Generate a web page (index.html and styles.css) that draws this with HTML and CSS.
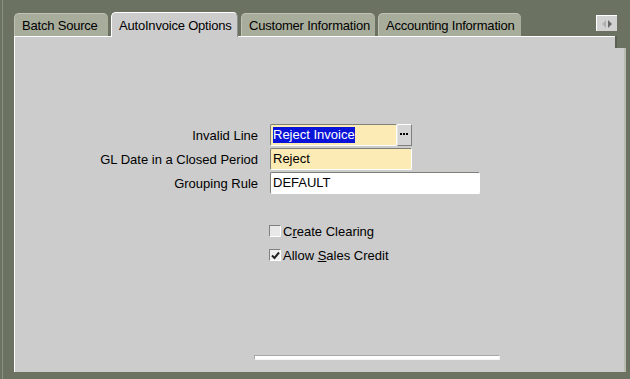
FILE: index.html
```html
<!DOCTYPE html>
<html lang="en">

<head>
  <meta charset="UTF-8">
  <title>AutoInvoice Options</title>
  <link rel="stylesheet" href="styles.css">
</head>

<body>
  <div class="window">
    <div class="tab-bar">
      <div class="tab tab-batch">Batch Source</div>
      <div class="tab tab-auto active">AutoInvoice Options</div>
      <div class="tab tab-customer">Customer Information</div>
      <div class="tab tab-accounting">Accounting Information</div>
      <div class="tab-scroll">
        <span class="arrow-left"></span>
        <span class="arrow-right"></span>
      </div>
    </div>

    <div class="panel">
      <div class="form">
        <label class="field-label">Invalid Line</label>
        <div class="field-group">
          <div class="field yellow short"><span class="selected">Reject Invoice</span></div>
          <div class="lov-button">
            <svg width="9" height="3" viewBox="0 0 9 3">
              <rect x="0" y="0" width="2" height="2" fill="#000" />
              <rect x="3" y="0" width="2" height="2" fill="#000" />
              <rect x="6" y="0" width="2" height="2" fill="#000" />
            </svg>
          </div>
        </div>

        <label class="field-label">GL Date in a Closed Period</label>
        <div class="field yellow medium">Reject</div>

        <label class="field-label">Grouping Rule</label>
        <div class="field long">DEFAULT</div>
      </div>

      <div class="checks">
        <div class="check-row">
          <span class="checkbox"></span>
          <span>C<u>r</u>eate Clearing</span>
        </div>
        <div class="check-row">
          <span class="checkbox checked">
            <svg width="9" height="9" viewBox="0 0 9 9">
              <path d="M1 4.5 L3.5 7 L8 1.5" fill="none" stroke="#222" stroke-width="2" />
            </svg>
          </span>
          <span>Allow <u>S</u>ales Credit</span>
        </div>
      </div>

      <div class="hscroll"></div>
    </div>
  </div>
</body>

</html>
```

FILE: styles.css
```css
* {
  margin: 0;
  padding: 0;
  box-sizing: border-box;
  font-family: 'Liberation Sans', Arial, sans-serif;
}

html,
body {
  height: 100%;
  overflow: hidden;
}

body {
  background-color: #6b7262;
  color: #000;
  font-size: 13px;
}

.window {
  height: 100%;
  margin-left: 2px;
  border-left: 1px solid #8c917f;
  padding: 12px 0 0 11px;
}

/* Tabs */
.tab-bar {
  display: flex;
  align-items: flex-end;
  gap: 3px;
  height: 24px;
  width: 605px;
  position: relative;
}

.tab {
  height: 23px;
  padding: 4px 0 0 7px;
  background: #a8ad9b;
  border-radius: 5px 5px 0 0;
  border-top: 1px solid #bfc3b3;
  border-left: 1px solid #bfc3b3;
  white-space: nowrap;
  letter-spacing: -0.2px;
}

.tab-batch {
  width: 94px;
}

.tab-auto {
  width: 127px;
}

.tab-customer {
  width: 134px;
}

.tab-accounting {
  width: 143px;
}

.tab.active {
  height: 25px;
  margin-bottom: -1px;
  padding-top: 5px;
  background: #cccccc;
  border-top: 1px solid #fff;
  border-left: 1px solid #fff;
  border-right: 1px solid #8f8f8f;
  position: relative;
  z-index: 1;
}

.tab-scroll {
  position: absolute;
  right: 2px;
  top: 3px;
  width: 21px;
  height: 16px;
  background: #d2d2d2;
  border-top: 1px solid #fff;
  border-left: 1px solid #fff;
  display: flex;
  align-items: center;
  justify-content: center;
  gap: 2px;
}

.arrow-left {
  border-right: 4px solid #b0b0b0;
  border-top: 4px solid transparent;
  border-bottom: 4px solid transparent;
}

.arrow-right {
  border-left: 4px solid #6a6a6a;
  border-top: 4px solid transparent;
  border-bottom: 4px solid transparent;
}

/* Panel */
.panel {
  position: relative;
  width: 612px;
  height: 336px;
  background: #cccccc;
  border-top: 1px solid #fff;
  border-left: 1px solid #fff;
  border-right: 2px solid #b9bdb0;
  display: flex;
  flex-direction: column;
  padding-top: 87px;
}

/* notch under the tab scroll button */
.panel::after {
  content: "";
  position: absolute;
  top: -1px;
  right: -2px;
  width: 9px;
  height: 12px;
  background: #6b7262;
  border-left: 2px solid #5b6152;
}

.form {
  display: grid;
  grid-template-columns: 243px auto;
  column-gap: 12px;
  row-gap: 2px;
  align-items: center;
  justify-items: start;
}

.field-label {
  justify-self: end;
  white-space: nowrap;
}

.field-group {
  display: flex;
}

.field {
  height: 22px;
  padding: 2px 2px 0 2px;
  border: 1px solid #fff;
  border-top-color: #7f7f7a;
  border-left-color: #7f7f7a;
  border-radius: 2px;
  background: #fff;
  line-height: 16px;
  white-space: nowrap;
}

.field.yellow {
  background: #fcebb4;
}

.field.short {
  width: 127px;
}

.field.medium {
  width: 142px;
}

.field.long {
  width: 210px;
}

.selected {
  display: inline-block;
  background: #0a14d8;
  color: #fff;
}

.lov-button {
  width: 15px;
  height: 22px;
  background: #d4d4d4;
  border: 1px solid #7f7f7f;
  border-top-color: #fff;
  border-left-color: #e6e6e6;
  display: flex;
  align-items: center;
  justify-content: center;
  padding-bottom: 2px;
}

/* Checkboxes */
.checks {
  margin-top: 25px;
  padding-left: 254px;
  display: flex;
  flex-direction: column;
}

.check-row {
  height: 24px;
  display: flex;
  align-items: center;
  gap: 2px;
}

.checkbox {
  width: 12px;
  height: 12px;
  border: 1px solid #fff;
  border-top-color: #808080;
  border-left-color: #808080;
  background: #e8e8e8;
  display: flex;
  align-items: center;
  justify-content: center;
}

.checkbox.checked {
  background: #f0f0f0;
}

u {
  text-decoration: underline;
}

/* Bottom scrollbar */
.hscroll {
  margin-top: auto;
  margin-bottom: 12px;
  margin-left: 239px;
  width: 246px;
  height: 5px;
  background: #fff;
  border: 1px solid #a8a8a8;
  border-right-color: #f0f0f0;
  border-bottom-color: #f4f4f4;
}
```
